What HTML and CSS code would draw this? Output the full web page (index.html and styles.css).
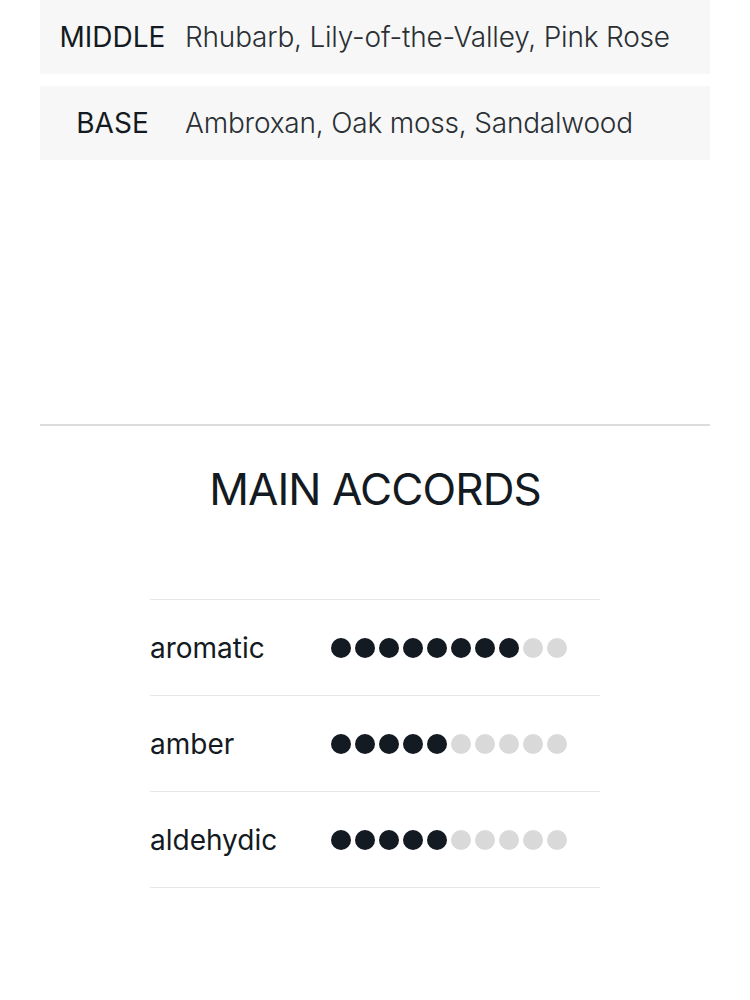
FILE: index.html
```html
<!DOCTYPE html>
<html>
<head>
<meta charset="utf-8">
<link rel="stylesheet" href="styles.css">
</head>
<body>
<div class="page">
  <div class="notes">
    <div class="note-row">
      <div class="note-label">MIDDLE</div>
      <div class="note-value">Rhubarb, Lily-of-the-Valley, Pink Rose</div>
    </div>
    <div class="note-row">
      <div class="note-label">BASE</div>
      <div class="note-value">Ambroxan, Oak moss, Sandalwood</div>
    </div>
  </div>
  <hr class="divider">
  <h2 class="title">MAIN ACCORDS</h2>
  <div class="accords">
    <div class="accord">
      <div class="accord-name">aromatic</div>
      <div class="dots">
        <span class="dot on"></span><span class="dot on"></span><span class="dot on"></span><span class="dot on"></span><span class="dot on"></span><span class="dot on"></span><span class="dot on"></span><span class="dot on"></span><span class="dot"></span><span class="dot"></span>
      </div>
    </div>
    <div class="accord">
      <div class="accord-name">amber</div>
      <div class="dots">
        <span class="dot on"></span><span class="dot on"></span><span class="dot on"></span><span class="dot on"></span><span class="dot on"></span><span class="dot"></span><span class="dot"></span><span class="dot"></span><span class="dot"></span><span class="dot"></span>
      </div>
    </div>
    <div class="accord">
      <div class="accord-name">aldehydic</div>
      <div class="dots">
        <span class="dot on"></span><span class="dot on"></span><span class="dot on"></span><span class="dot on"></span><span class="dot on"></span><span class="dot"></span><span class="dot"></span><span class="dot"></span><span class="dot"></span><span class="dot"></span>
      </div>
    </div>
  </div>
</div>
</body>
</html>
```
FILE: styles.css
```css
* { box-sizing: border-box; }
html, body { margin: 0; padding: 0; background: #ffffff; }
body {
  font-family: Inter, "Noto Sans", sans-serif;
  color: #141a21;
}
.page { padding: 0 40px; }
.notes { display: flex; flex-direction: column; gap: 12px; }
.note-row {
  display: grid;
  grid-template-columns: 145px 1fr;
  align-items: center;
  height: 74px;
  background: #f7f7f7;
}
.note-label {
  text-align: center;
  font-size: 28px;
  color: #141a21;
}
.note-value {
  font-size: 28px;
  font-weight: 300;
  letter-spacing: -0.2px;
  color: #2a2f34;
}
.divider {
  margin: 264px 0 0;
  border: 0;
  height: 2px;
  background: #dcdcdc;
}
.title {
  margin: 34px 0 0;
  text-align: center;
  font-size: 44px;
  font-weight: 400;
  letter-spacing: -0.9px;
  line-height: 58px;
  color: #141a21;
}
.accords {
  width: 450px;
  margin: 81px auto 0;
  border-bottom: 1px solid #e6e6e6;
}
.accord {
  display: grid;
  grid-template-columns: 181px 1fr;
  align-items: center;
  height: 96px;
  border-top: 1px solid #e6e6e6;
}
.accord-name { font-size: 28px; color: #141a21; }
.dots { display: flex; gap: 4px; }
.dot {
  width: 20px;
  height: 20px;
  border-radius: 50%;
  background: #d9d9d9;
}
.dot.on { background: #141a21; }
```
